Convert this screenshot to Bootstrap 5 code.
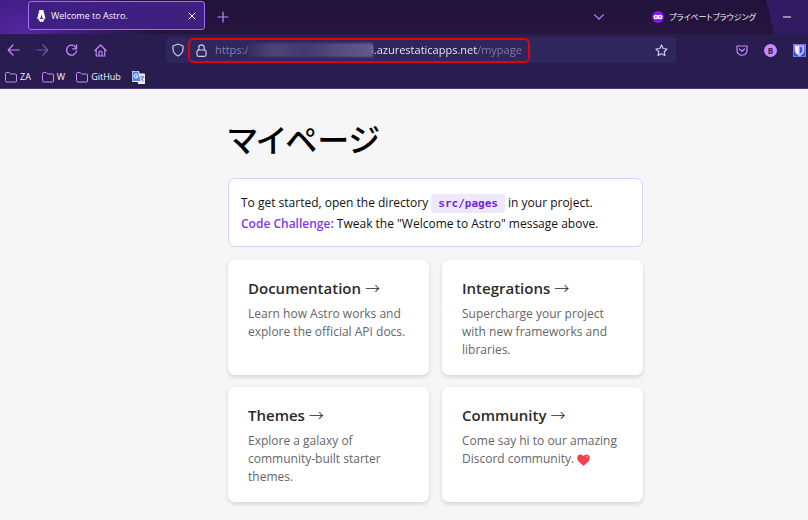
<!DOCTYPE html>
<html lang="ja">
<head>
<meta charset="utf-8">
<meta name="viewport" content="width=device-width, initial-scale=1">
<title>Welcome to Astro.</title>
<link href="https://cdn.jsdelivr.net/npm/bootstrap@5.3.0/dist/css/bootstrap.min.css" rel="stylesheet">
<style>
body{font-family:"Open Sans","Noto Sans CJK JP",sans-serif;font-size:12px;background:#f6f6f6;color:#111}
button,a{color:inherit}
svg{display:block;flex:none;fill:none;stroke:currentColor;stroke-linecap:round;stroke-linejoin:round}
.chrome{background:#291d4f;color:#c58aff;border-bottom:1px solid #453a78;font-size:9px;line-height:16px}
.tabstrip{height:34px;background:radial-gradient(circle at 20px 44px,#5b27a8 0,#43208a 40px,transparent 130px),linear-gradient(#20123a,#26163f)}
.icon-btn{background:none;border:0;padding:0;flex:none}
.tab-item{width:177px;height:29px;margin:1px 12px 0 28px;padding:0 8px 0 7px;background:#3e2080;border:1px solid #a56cf5;border-radius:3px;color:#fbf4ff}
.win-end{width:42px;background:#321b62;clip-path:polygon(0 0,100% 0,100% 100%,20% 100%)}
.private{color:#fbf4ff;font-size:8px;font-feature-settings:"palt";gap:5px;margin-right:10px}
.toolbar-row{height:32px;padding:0 2px 0 7px}
.address{background:#2e265c;border-radius:4px;height:26px;color:#d8c6f4;padding-left:6px;margin:0 60px 0 59px}
.hilite{border:2px solid #e3000f;border-radius:6px;height:25px;width:342px;padding-left:6px;font-size:11px;color:#8a7fa6}
.smudge{flex:none;width:125px;height:14px;margin-right:-6px;z-index:1;background:linear-gradient(90deg,#352c62,#4f457a 20%,#433970 45%,#544a80 70%,#655b90);filter:blur(1px)}
.url{border:0;padding:0;width:158px;outline:0;font-size:11px;background:linear-gradient(90deg,#fbf4ff 111px,#8a7fa6 111px);-webkit-background-clip:text;background-clip:text;-webkit-text-fill-color:transparent}
.account{width:13px;height:13px;border-radius:50%;background:#c58aff;color:#291d4f;font-size:8px;line-height:13px;font-weight:700}
.bookmarks{height:22px;padding:0 5px;gap:11px;color:#fbf4ff}
.bookmarks a{text-decoration:none;gap:3px}
.bookmarks .fold{color:#c58aff}
main{max-width:643px;padding:24px 0 16px 228px}
h1{font:500 32px/50px "Noto Sans CJK JP",sans-serif;font-feature-settings:"palt";color:#000;margin:0 0 15px}
.intro{background:#fff;border:1px solid #dccffb;border-radius:7px;padding:13px 12px 12px;line-height:21px;margin-bottom:13px}
.intro code{font:700 11px/18px "DejaVu Sans Mono",monospace;color:#6d28d9;background:#efe7fd;border-radius:4px;padding:3px 7px}
.intro strong{color:#7c3aed;font-weight:600}
.tiles{display:grid;grid-template-columns:1fr 1fr;gap:12px 13px}
.tile{background:#fff;border-radius:7px;box-shadow:0 2px 4px rgba(0,0,0,.14);min-height:115px;padding:17px 16px 14px 20px;color:#666;text-decoration:none;line-height:18px}
.tile h2{font-size:15px;line-height:22px;font-weight:600;color:#2b2b2b;margin:0 0 6px}
.tile h2 span{font-family:"Noto Sans CJK JP",sans-serif;font-weight:300}
.tile p{margin:0}
</style>
</head>
<body>
<header class="chrome">
  <div class="tabstrip d-flex">
    <div class="tab-item d-flex align-items-center">
      <svg width="11" height="12" viewBox="0 0 11 12" stroke="none"><path fill="#fff" d="M4.200 0h2.600L9 8.400A8 8 0 0 0 7 7.900L5.500 3.600 4 7.900a8 8 0 0 0-2 .5zM3.200 8.800c1 .8 3.500.8 4.600 0 .4 1.500-.7 1.800-1.300 3.200-.5-.5-.3-1-1-1.300-.5.3-.7.8-.7 1.300-1.200-.8-2-1.800-1.600-3.200z"/></svg>
      <span class="ms-1 flex-grow-1">Welcome to Astro.</span>
      <button class="icon-btn" aria-label="Close tab"><svg width="8" height="8" viewBox="0 0 8 8"><path d="M1 1l6 6M7 1L1 7"/></svg></button>
    </div>
    <button class="icon-btn me-auto" aria-label="New tab"><svg width="12" height="12" viewBox="0 0 12 12" stroke-width="1.200"><path d="M6 1v10M1 6h10"/></svg></button>
    <button class="icon-btn me-5" aria-label="List tabs"><svg width="10" height="6" viewBox="0 0 10 6" stroke-width="1.200"><path d="M.7.8L5 5.200 9.300.8"/></svg></button>
    <div class="private d-flex align-items-center">
      <svg width="12" height="12" viewBox="0 0 12 12"><circle cx="6" cy="6" r="6" fill="#8514ee" stroke="none"/><path stroke="#fff" stroke-width="1.600" d="M6 5.600C4.500 4 2.300 4 2.300 6S4.800 8 6 6.200C7.200 8 9.700 8 9.700 6S7.500 4 6 5.600z"/></svg>
      <span>プライベートブラウジング</span>
    </div>
    <div class="win-end d-flex align-items-center justify-content-center"><button class="icon-btn text-white" aria-label="Minimize"><svg width="8" height="2" viewBox="0 0 8 2"><path d="M0 1h8"/></svg></button></div>
  </div>
  <div class="toolbar-row d-flex align-items-center">
    <div class="d-flex align-items-center gap-3">
      <button class="icon-btn" aria-label="Back"><svg width="13" height="12" viewBox="0 0 13 12" stroke-width="1.200"><path d="M12 6H1.500M6 1L1.200 6 6 11"/></svg></button>
      <button class="icon-btn opacity-50" aria-label="Forward"><svg width="13" height="12" viewBox="0 0 13 12" stroke-width="1.200"><path d="M1 6h10.500M7 1l4.800 5L7 11"/></svg></button>
      <button class="icon-btn" aria-label="Reload"><svg width="13" height="13" viewBox="0 0 13 13" stroke-width="1.300"><path d="M10.800 3.500A5 5 0 1 0 11.500 7M11.500 1v3.800H7.700"/></svg></button>
      <button class="icon-btn" aria-label="Home"><svg width="13" height="13" viewBox="0 0 13 13" stroke-width="1.200"><path d="M1 6.500L6.500 1 12 6.500M2.200 5.500V12h8.600V5.500M5 12V8.500a1.500 1.500 0 0 1 3 0V12"/></svg></button>
    </div>
    <div class="address d-flex align-items-center flex-grow-1">
      <button class="icon-btn me-1" aria-label="Tracking protection"><svg width="12" height="14" viewBox="0 0 12 14" stroke-width="1.200"><path d="M6 1l5 2v3c0 3-2 5.500-5 7C3 11.500 1 9 1 6V3z"/></svg></button>
      <div class="hilite d-flex align-items-center">
        <svg class="me-2" width="11" height="13" viewBox="0 0 11 13" stroke-width="1.200"><g stroke="#d8c6f4"><rect x="1" y="6" width="9" height="6.300" rx="1.500"/><path d="M2.800 6V3.500a2.700 2.700 0 0 1 5.400 0V6"/></g></svg>
        <label for="url">https:/</label>
        <span class="smudge"></span>
        <input id="url" class="url" type="text" value="3.azurestaticapps.net/mypage">
      </div>
      <button class="icon-btn ms-auto me-1 pe-1" aria-label="Bookmark this page"><svg width="13" height="13" viewBox="0 0 13 13" stroke-width="1.200"><path d="M6.500 1l1.700 3.500 3.800.5-2.800 2.700.7 3.800-3.400-1.800-3.400 1.800.7-3.800L1 5l3.800-.5z"/></svg></button>
    </div>
    <div class="d-flex align-items-center gap-3">
      <button class="icon-btn" aria-label="Save to Pocket"><svg width="12" height="11" viewBox="0 0 12 11" stroke-width="1.200"><path d="M1 1h10v4.500a5 4.700 0 0 1-10 0zM3.500 4L6 6.300 8.500 4"/></svg></button>
      <button class="icon-btn account" aria-label="Account">B</button>
      <button class="icon-btn" aria-label="Password manager"><svg width="13" height="13" viewBox="0 0 13 13" stroke="none"><rect width="13" height="13" rx="2" fill="#175ddc"/><path fill="#fff" d="M2 1.500h9V7c0 2-2 3.500-4.500 5C4 10.500 2 9 2 7z"/><path fill="#175ddc" d="M6.500 2.700h3.200V7c0 1.300-1.500 2.500-3.200 3.600z"/></svg></button>
    </div>
  </div>
  <nav class="bookmarks d-flex align-items-center" aria-label="Bookmarks">
    <a href="#" class="d-flex align-items-center"><svg class="fold" width="12" height="11" viewBox="0 0 12 11"><path d="M.5 1.500a1 1 0 0 1 1-1h2.700l1.500 1.500h4.800a1 1 0 0 1 1 1v6a1 1 0 0 1-1 1h-9a1 1 0 0 1-1-1z"/></svg><span>ZA</span></a>
    <a href="#" class="d-flex align-items-center"><svg class="fold" width="12" height="11" viewBox="0 0 12 11"><path d="M.5 1.500a1 1 0 0 1 1-1h2.700l1.500 1.500h4.800a1 1 0 0 1 1 1v6a1 1 0 0 1-1 1h-9a1 1 0 0 1-1-1z"/></svg><span>W</span></a>
    <a href="#" class="d-flex align-items-center"><svg class="fold" width="12" height="11" viewBox="0 0 12 11"><path d="M.5 1.500a1 1 0 0 1 1-1h2.700l1.500 1.500h4.800a1 1 0 0 1 1 1v6a1 1 0 0 1-1 1h-9a1 1 0 0 1-1-1z"/></svg><span>GitHub</span></a>
    <a href="#" aria-label="Translate"><svg width="13" height="13" viewBox="0 0 13 13" stroke="none"><path fill="#e4e6ea" d="M5 3h7a1 1 0 0 1 1 1v8a1 1 0 0 1-1 1H7z"/><path fill="#4a86e8" d="M1 0h5.500L9 10.500H1a1 1 0 0 1-1-1V1a1 1 0 0 1 1-1z"/><path stroke="#fff" d="M5.500 3.700a1.900 1.900 0 1 0 .4 1.500H4.200"/><path stroke="#63768e" stroke-width=".8" d="M8 6h4M10 5v1M11.300 6c-.5 2-1.500 3-2.500 3.700M9 7.500c.6 1.200 1.500 2 2.500 2.500"/></svg></a>
  </nav>
</header>
<main>
  <h1>マイページ</h1>
  <p class="intro">To get started, open the directory <code>src/pages</code> in your project.<br><strong>Code Challenge:</strong> Tweak the "Welcome to Astro" message above.</p>
  <div class="tiles">
    <a class="tile" href="#"><h2>Documentation <span>→</span></h2><p>Learn how Astro works and explore the official API docs.</p></a>
    <a class="tile" href="#"><h2>Integrations <span>→</span></h2><p>Supercharge your project with new frameworks and libraries.</p></a>
    <a class="tile" href="#"><h2>Themes <span>→</span></h2><p>Explore a galaxy of community-built starter themes.</p></a>
    <a class="tile" href="#"><h2>Community <span>→</span></h2><p>Come say hi to our amazing Discord community. <svg class="d-inline-block align-middle" width="13" height="12" viewBox="0 0 13 12" role="img" aria-label="Heart"><path fill="#f2404f" stroke="none" d="M6.500 11.800C3 9.200.2 6.800.2 3.800.2 1.800 1.600.4 3.400.4c1.300 0 2.400.7 3.100 1.900C7.200 1.100 8.300.4 9.600.4c1.800 0 3.200 1.400 3.200 3.400 0 3-2.800 5.400-6.300 8z"/><path stroke="#ff9aa2" d="M9 2.300c1-.5 2 .2 1.900 1.400"/></svg></p></a>
  </div>
</main>
<script src="https://cdn.jsdelivr.net/npm/bootstrap@5.3.0/dist/js/bootstrap.bundle.min.js"></script>
</body>
</html>
